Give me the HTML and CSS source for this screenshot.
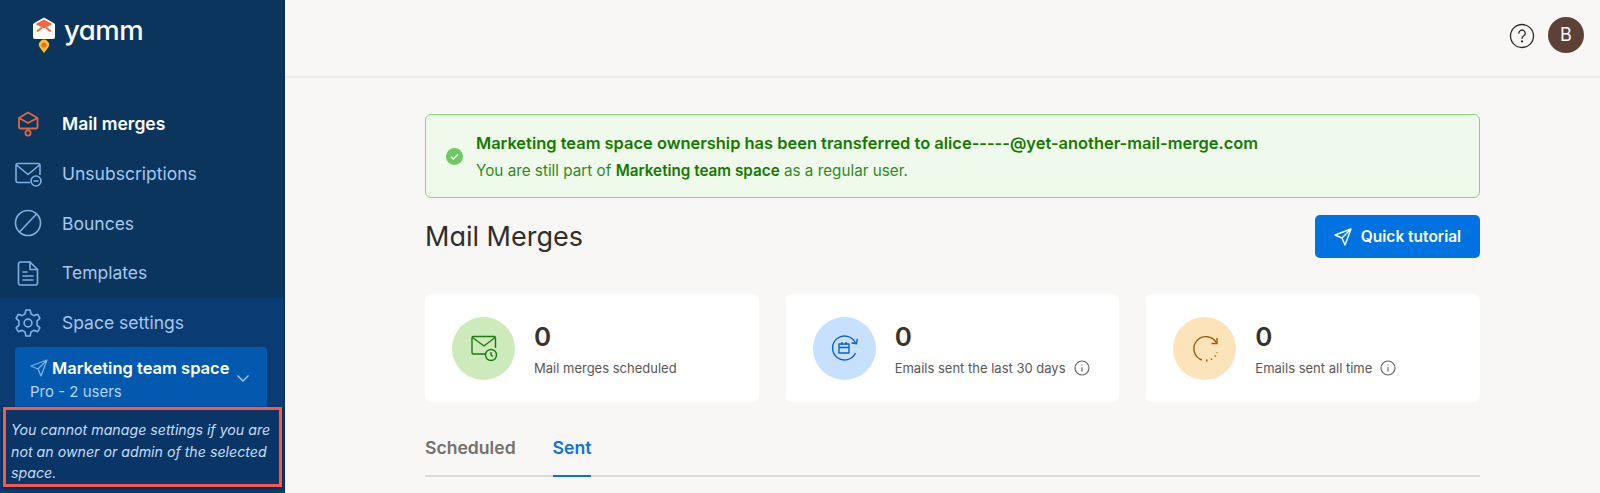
FILE: index.html
```html
<!DOCTYPE html>
<html lang="en">

<head>
  <meta charset="UTF-8">
  <meta name="viewport" content="width=device-width, initial-scale=1.0">
  <title>Mail Merges</title>
  <link rel="stylesheet" href="styles.css">
</head>

<body>
  <div class="app">
    <aside class="sidebar">
      <div class="logo">
        <svg class="logo-mark" width="26" height="36" viewBox="0 0 26 36">
          <path d="M2.5 7 L13 1 L23.5 7 V20.5 Q23.5 21.5 22.5 21.5 H3.5 Q2.5 21.5 2.5 20.5 Z" fill="#fff" stroke="#fff" stroke-linejoin="round" />
          <path d="M4.5 7 L13 2.5 L21.5 7 L13 11.5 Z" fill="#f0693a" />
          <path d="M6 14.5 L11 10.5 M20 14.5 L15 10.5" stroke="#f0693a" stroke-width="1.8" />
          <path d="M13 36 L8.8 30.5 A5 5 0 1 1 17.2 30.5 Z" fill="#fcc419" />
          <circle cx="13" cy="28" r="2.6" fill="#f0693a" />
        </svg>
        <span class="logo-text">yamm</span>
      </div>

      <nav class="nav">
        <a class="nav-item active">
          <svg class="nav-icon" width="28" height="28" viewBox="0 0 28 28" fill="none" stroke="#e0683c" stroke-width="1.8" stroke-linejoin="round">
          <path d="M5 8 L14 2.5 L23.5 8 V17 Q23.5 18.5 22 18.5 H6.5 Q5 18.5 5 17 Z" />
          <path d="M5 8 L14 13 L23.5 8" />
          <path d="M14 18.5 V20" />
          <circle cx="14" cy="23" r="2.6" />
        </svg>
          Mail merges
        </a>
        <a class="nav-item">
          <svg class="nav-icon" width="28" height="28" viewBox="0 0 28 28" fill="none" stroke="#7eb0e4" stroke-width="1.6" stroke-linejoin="round">
          <path d="M16 22.5 H4 Q2 22.5 2 20.5 V5.5 Q2 3.5 4 3.5 H24 Q26 3.5 26 5.5 V15" />
          <path d="M2.5 5 L14 14.5 L25.5 5" />
          <circle cx="22" cy="21" r="5" />
          <path d="M19.5 21 H24.5" />
        </svg>
          Unsubscriptions
        </a>
        <a class="nav-item">
          <svg class="nav-icon" width="28" height="28" viewBox="0 0 28 28" fill="none" stroke="#7eb0e4" stroke-width="1.6">
          <circle cx="14" cy="14" r="12.5" />
          <path d="M5.5 23 L22.5 5" />
        </svg>
          Bounces
        </a>
        <a class="nav-item">
          <svg class="nav-icon" width="28" height="28" viewBox="0 0 28 28" fill="none" stroke="#7eb0e4" stroke-width="1.6" stroke-linejoin="round" stroke-linecap="round">
          <path d="M6.5 3 H16 L23.5 10.5 V24 Q23.5 26 21.5 26 H6.5 Q4.5 26 4.5 24 V5 Q4.5 3 6.5 3 Z" />
          <path d="M16 3 V10.5 H23.5" />
          <path d="M9 13 H13 M9 17 H19 M9 21 H19" />
        </svg>
          Templates
        </a>
      </nav>

      <div class="space-panel">
        <a class="nav-item">
          <svg class="nav-icon" width="28" height="28" viewBox="1.2 1.2 21.6 21.6" fill="none" stroke="#7eb0e4" stroke-width="1.25" stroke-linejoin="round">
          <circle cx="12" cy="12" r="3" />
          <path d="M10.3 2 H13.7 L14.3 5 L16.6 6.3 L19.5 5.3 L21.2 8.3 L19 10.3 V13.7 L21.2 15.7 L19.5 18.7 L16.6 17.7 L14.3 19 L13.7 22 H10.3 L9.7 19 L7.4 17.7 L4.5 18.7 L2.8 15.7 L5 13.7 V10.3 L2.8 8.3 L4.5 5.3 L7.4 6.3 L9.7 5 Z" />
        </svg>
          Space settings
        </a>
        <div class="space-box">
          <div class="space-info">
            <div class="space-name">
              <svg width="18" height="18" viewBox="0 0 18 18" fill="none" stroke="#7eb0e4" stroke-width="1.3" stroke-linejoin="round">
                <path d="M1 7 L17 1 L11 17 L8 10 Z M8 10 L17 1" />
              </svg>
              Marketing team space
            </div>
            <div class="space-plan">Pro - 2 users</div>
          </div>
          <svg class="chevron" width="14" height="9" viewBox="0 0 14 9" fill="none" stroke="#a9cdf2" stroke-width="1.4">
            <path d="M1.5 1.5 L7 7 L12.5 1.5" />
          </svg>
        </div>
      </div>

      <div class="settings-note">You cannot manage settings if you are not an owner or admin of the selected space.</div>
    </aside>

    <div class="main">
      <header class="topbar">
        <svg class="help-icon" width="26" height="26" viewBox="0 0 26 26" fill="none" stroke="#2b2b2b" stroke-width="1.3">
          <circle cx="13" cy="13" r="11.5" />
          <path d="M9.8 10.2 A3.2 3.2 0 1 1 14.6 13 Q13 13.9 13 15.4" stroke-linecap="round" />
          <circle cx="13" cy="18.4" r="0.5" />
        </svg>
        <div class="avatar">B</div>
      </header>

      <main class="content">
        <div class="alert">
          <svg width="17" height="17" viewBox="0 0 17 17">
            <circle cx="8.5" cy="8.5" r="8.5" fill="#6ccb5f" />
            <path d="M5 8.8 L7.5 11 L12 6.2" fill="none" stroke="#fff" stroke-width="1.6" />
          </svg>
          <div>
            <div class="alert-title">Marketing team space ownership has been transferred to alice-----@yet-another-mail-merge.com</div>
            <div class="alert-text">You are still part of <b>Marketing team space</b> as a regular user.</div>
          </div>
        </div>

        <div class="title-row">
          <h1>Mail Merges</h1>
          <button class="tutorial-btn">
            <svg width="18" height="18" viewBox="0 0 18 18" fill="none" stroke="#fff" stroke-width="1.4" stroke-linejoin="round">
              <path d="M1 7 L17 1 L11 17 L8 10 Z M8 10 L17 1" />
            </svg>
            Quick tutorial
          </button>
        </div>

        <div class="stats">
          <div class="stat-card">
            <div class="stat-circle green">
              <svg width="28" height="28" viewBox="0 0 28 28" fill="none" stroke="#1c7a10" stroke-width="1.4" stroke-linejoin="round">
                <path d="M15 20 H3.5 Q2 20 2 18.5 V4 Q2 2.5 3.5 2.5 H24 Q25.5 2.5 25.5 4 V14" />
                <path d="M2.5 3.5 L14 12 L25 3.5" />
                <circle cx="21" cy="21" r="5.5" />
                <path d="M21 18 V21 L23 22.5" />
              </svg>
            </div>
            <div>
              <div class="stat-value">0</div>
              <div class="stat-label">Mail merges scheduled</div>
            </div>
          </div>
          <div class="stat-card">
            <div class="stat-circle blue">
              <svg width="28" height="28" viewBox="0 0 28 28" fill="none" stroke="#0b62c4" stroke-width="1.4" stroke-linejoin="round">
                <path d="M25.5 9 A12 12 0 1 0 25.5 19" />
                <path d="M26.5 4.5 V9.5 H21.5" transform="rotate(12 25 9)" />
                <path d="M9 10 H19 V19 H9 Z M9 13.5 H19 M12 8 V11 M16 8 V11" />
              </svg>
            </div>
            <div>
              <div class="stat-value">0</div>
              <div class="stat-label">Emails sent the last 30 days
                <svg class="info" width="16" height="16" viewBox="0 0 16 16" fill="none" stroke="#5f5f5f" stroke-width="1.1">
                  <circle cx="8" cy="8" r="7" />
                  <path d="M8 7.2 V11.5 M8 4.5 V5.6" />
                </svg>
              </div>
            </div>
          </div>
          <div class="stat-card">
            <div class="stat-circle orange">
              <svg width="28" height="28" viewBox="0 0 28 28" fill="none" stroke="#9a5b10" stroke-width="1.4">
                <path d="M25.5 9 A12 12 0 1 0 11 26" />
                <path d="M26 4 V9.5 H20.5" />
                <path d="M15 26.5 H16.5 M20 25.5 L21 25 M24 22.5 L24.6 21.6 M26 18.5 V18" stroke-width="1.8" />
              </svg>
            </div>
            <div>
              <div class="stat-value">0</div>
              <div class="stat-label">Emails sent all time
                <svg class="info" width="16" height="16" viewBox="0 0 16 16" fill="none" stroke="#5f5f5f" stroke-width="1.1">
                  <circle cx="8" cy="8" r="7" />
                  <path d="M8 7.2 V11.5 M8 4.5 V5.6" />
                </svg>
              </div>
            </div>
          </div>
        </div>

        <div class="tabs">
          <div class="tab">Scheduled</div>
          <div class="tab selected">Sent</div>
        </div>
      </main>
    </div>
  </div>
</body>

</html>
```

FILE: styles.css
```css
* {
  box-sizing: border-box;
}

html,
body {
  height: 100%;
}

body {
  margin: 0;
  font-family: Inter, "Liberation Sans", sans-serif;
  background-color: #f8f7f5;
  overflow: hidden;
}

.app {
  display: flex;
  height: 493px;
}

.sidebar {
  position: relative;
  flex: 0 0 285px;
  display: flex;
  flex-direction: column;
  background-color: #0b355d;
  border-right: 1px solid #0a2a5c;
  overflow: hidden;
}

.logo {
  height: 99px;
  padding: 17px 0 0 31px;
  display: flex;
  align-items: flex-start;
  gap: 7px;
}

.logo-text {
  margin-top: -2px;
  color: #fff;
  font-size: 27.5px;
  font-weight: 500;
  line-height: 30px;
  letter-spacing: -0.5px;
  font-feature-settings: "cv11";
}

.nav {
  display: flex;
  flex-direction: column;
}

.nav-item {
  height: 49.7px;
  padding-left: 14px;
  display: flex;
  align-items: center;
  gap: 20px;
  font-size: 17.5px;
  color: #a5c7ee;
}

.nav-item.active {
  color: #fff;
  font-weight: 600;
}

.nav-icon {
  flex: none;
}

.space-panel {
  flex: 1;
  background-color: #0a3c73;
}

.space-box {
  margin: 0 0 0 15px;
  width: 252px;
  height: 80px;
  padding: 11px 17px 9px 15px;
  display: flex;
  align-items: flex-start;
  justify-content: space-between;
  background-color: #0359ae;
  border-radius: 4px;
}

.space-name {
  display: flex;
  align-items: center;
  gap: 4px;
  color: #fff;
  font-size: 16.5px;
  font-weight: 600;
  white-space: nowrap;
}

.space-plan {
  margin-top: 4px;
  font-size: 15px;
  color: #b6d4f5;
}

.chevron {
  margin-top: 16px;
}

/* red annotation drawn over the bottom of the sidebar */
.settings-note {
  position: absolute;
  left: 3px;
  top: 407px;
  width: 279px;
  height: 80px;
  padding: 9px 3px 0 5px;
  font-size: 14.2px;
  font-style: italic;
  line-height: 21.5px;
  color: #c6dcf5;
  background-color: #0a3667;
  border: 3px solid #f9584b;
  box-shadow: 0 1px 3px rgba(0, 0, 0, 0.5);
}

.main {
  flex: 1;
  min-width: 0;
}

.topbar {
  height: 78px;
  padding: 0 16px 7px 0;
  display: flex;
  align-items: center;
  justify-content: flex-end;
  gap: 13px;
  border-bottom: 2px solid #ecebe9;
}

.help-icon {
  margin-top: 3px;
}

.avatar {
  width: 36px;
  height: 36px;
  border-radius: 50%;
  display: flex;
  align-items: center;
  justify-content: center;
  background-color: #5d4037;
  color: #fff;
  font-size: 18px;
}

.content {
  width: 1055px;
  margin-left: 140px;
  padding-top: 36px;
}

.alert {
  height: 84px;
  padding: 0 20px;
  display: flex;
  align-items: center;
  gap: 13px;
  background-color: #f0faec;
  border: 1px solid #8ad66f;
  border-radius: 6px;
}

.alert-title {
  font-size: 16.45px;
  font-weight: 600;
  color: #137a00;
}

.alert-text {
  margin-top: 8px;
  font-size: 15.25px;
  color: #2f8a22;
}

.alert-text b {
  font-weight: 600;
  color: #137a00;
}

.title-row {
  height: 96px;
  padding: 17px 0 36px;
  display: flex;
  align-items: center;
  justify-content: space-between;
}

h1 {
  margin: 0;
  font-size: 27px;
  font-weight: 400;
  color: #312d2b;
  font-feature-settings: "cv11";
}

.tutorial-btn {
  width: 165px;
  height: 43px;
  display: flex;
  align-items: center;
  justify-content: center;
  gap: 9px;
  border: 0;
  border-radius: 5px;
  background-color: #0073e0;
  color: #fff;
  font-family: inherit;
  font-size: 15.5px;
  font-weight: 600;
}

.stats {
  display: flex;
  gap: 27px;
}

.stat-card {
  flex: 1;
  height: 108px;
  padding-left: 27px;
  display: flex;
  align-items: center;
  gap: 19px;
  background-color: #fff;
  border-radius: 6px;
}

.stat-circle {
  width: 63px;
  height: 63px;
  border-radius: 50%;
  display: flex;
  align-items: center;
  justify-content: center;
}

.stat-circle.green {
  background-color: #cdeabb;
}

.stat-circle.blue {
  background-color: #c6e0fd;
}

.stat-circle.orange {
  background-color: #fde3b9;
}

.stat-value {
  font-size: 26px;
  font-weight: 600;
  line-height: 32px;
  color: #38322f;
}

.stat-label {
  margin-top: 7px;
  display: flex;
  align-items: center;
  gap: 8px;
  font-size: 13px;
  color: #5b5654;
}

.tabs {
  margin-top: 28px;
  height: 47px;
  display: flex;
  gap: 37px;
  border-bottom: 2px solid #dcdbd9;
}

.tab {
  height: 47px;
  padding-top: 7px;
  font-size: 17.6px;
  font-weight: 600;
  color: #75706c;
}

.tab.selected {
  color: #0b72e0;
  border-bottom: 2px solid #0b72e0;
}
```
